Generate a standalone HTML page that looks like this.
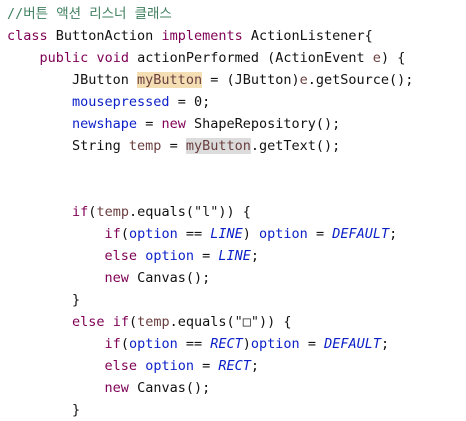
<!DOCTYPE html>
<html><head><meta charset="utf-8"><style>
html,body{margin:0;padding:0;background:#fff;width:466px;height:420px;overflow:hidden}
pre{margin:0;position:absolute;left:7px;top:3px;font-family:"DejaVu Sans Mono","Noto Sans CJK KR",monospace;font-size:13.5px;line-height:22px;color:#111}
.k{color:#7f0055}.f{color:#0a1fc8}.i{color:#0a1fc8;font-style:italic}.c{color:#3f7f5f}.v{color:#6a3e3e}
.h1{background:#f4dfb5}.h2{background:#dcdcdc}.s{color:#222}
</style></head><body><pre><span class="c">//버튼 액션 리스너 클래스</span>
<span class="k">class</span> ButtonAction <span class="k">implements</span> ActionListener{
    <span class="k">public</span> <span class="k">void</span> actionPerformed (ActionEvent <span class="v">e</span>) {
        JButton <span class="v h1">myButton</span> = (JButton)<span class="v">e</span>.getSource();
        <span class="f">mousepressed</span> = 0;
        <span class="f">newshape</span> = <span class="k">new</span> ShapeRepository();
        String <span class="v">temp</span> = <span class="v h2">myButton</span>.getText();


        <span class="k">if</span>(<span class="v">temp</span>.equals(<span class="s">"l"</span>)) {
            <span class="k">if</span>(<span class="f">option</span> == <span class="i">LINE</span>) <span class="f">option</span> = <span class="i">DEFAULT</span>;
            <span class="k">else</span> <span class="f">option</span> = <span class="i">LINE</span>;
            <span class="k">new</span> Canvas();
        }
        <span class="k">else</span> <span class="k">if</span>(<span class="v">temp</span>.equals(<span class="s">"□"</span>)) {
            <span class="k">if</span>(<span class="f">option</span> == <span class="i">RECT</span>)<span class="f">option</span> = <span class="i">DEFAULT</span>;
            <span class="k">else</span> <span class="f">option</span> = <span class="i">RECT</span>;
            <span class="k">new</span> Canvas();
        }</pre></body></html>
